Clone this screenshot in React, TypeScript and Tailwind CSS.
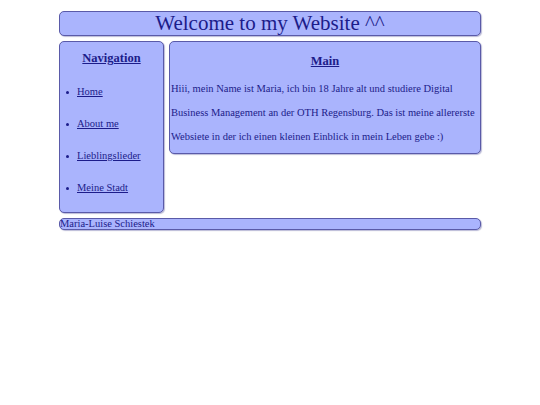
import React from "react";

const box =
  "bg-[#aab4fd] border border-[#5a5aa8] rounded-[5px] shadow-[1px_1px_1px_rgba(60,60,140,0.35)]";

export default function App() {
  const links = ["Home", "About me", "Lieblingslieder", "Meine Stadt"];
  return (
    <div
      className="w-full min-h-[405px] bg-white text-[#1c1c8a]"
      style={{ fontFamily: '"Liberation Serif", "Times New Roman", serif' }}
    >
      <div className="w-[422px] mx-auto pt-[11px] flex flex-col gap-[5px]">
        <header className={`${box} h-[25px] flex items-center justify-center`}>
          <h1 className="text-[21px] leading-none">Welcome to my Website ^^</h1>
        </header>
        <div className="flex gap-[5px] items-start">
          <nav className={`${box} w-[105px] h-[172px] pt-[9px]`}>
            <h2 className="text-[12.5px] font-bold underline text-center leading-[15px]">
              Navigation
            </h2>
            <ul className="mt-[10px]">
              {links.map((l) => (
                <li key={l} className="flex items-center h-[32px] text-[10.5px] pl-[6px]">
                  <span className="w-[3px] h-[3px] rounded-full bg-[#1c1c8a] mr-[8px]" />
                  <a href="#" className="underline text-[#1c1c8a]">
                    {l}
                  </a>
                </li>
              ))}
            </ul>
          </nav>
          <main className={`${box} flex-1 h-[113px] pt-[12px]`}>
            <h2 className="text-[12.5px] font-bold underline text-center leading-[15px]">
              Main
            </h2>
            <p className="mt-[8px] text-[10.5px] leading-[24px] pl-[1px]">
              Hiii, mein Name ist Maria, ich bin 18 Jahre alt und studiere Digital Business
              Management an der OTH Regensburg. Das ist meine allererste Websiete in der ich
              einen kleinen Einblick in mein Leben gebe :)
            </p>
          </main>
        </div>
        <footer className={`${box} h-[12px] flex items-center text-[10.5px] leading-none rounded-[5px]`}>
          <span className="pl-[0px]">Maria-Luise Schiestek</span>
        </footer>
      </div>
    </div>
  );
}
